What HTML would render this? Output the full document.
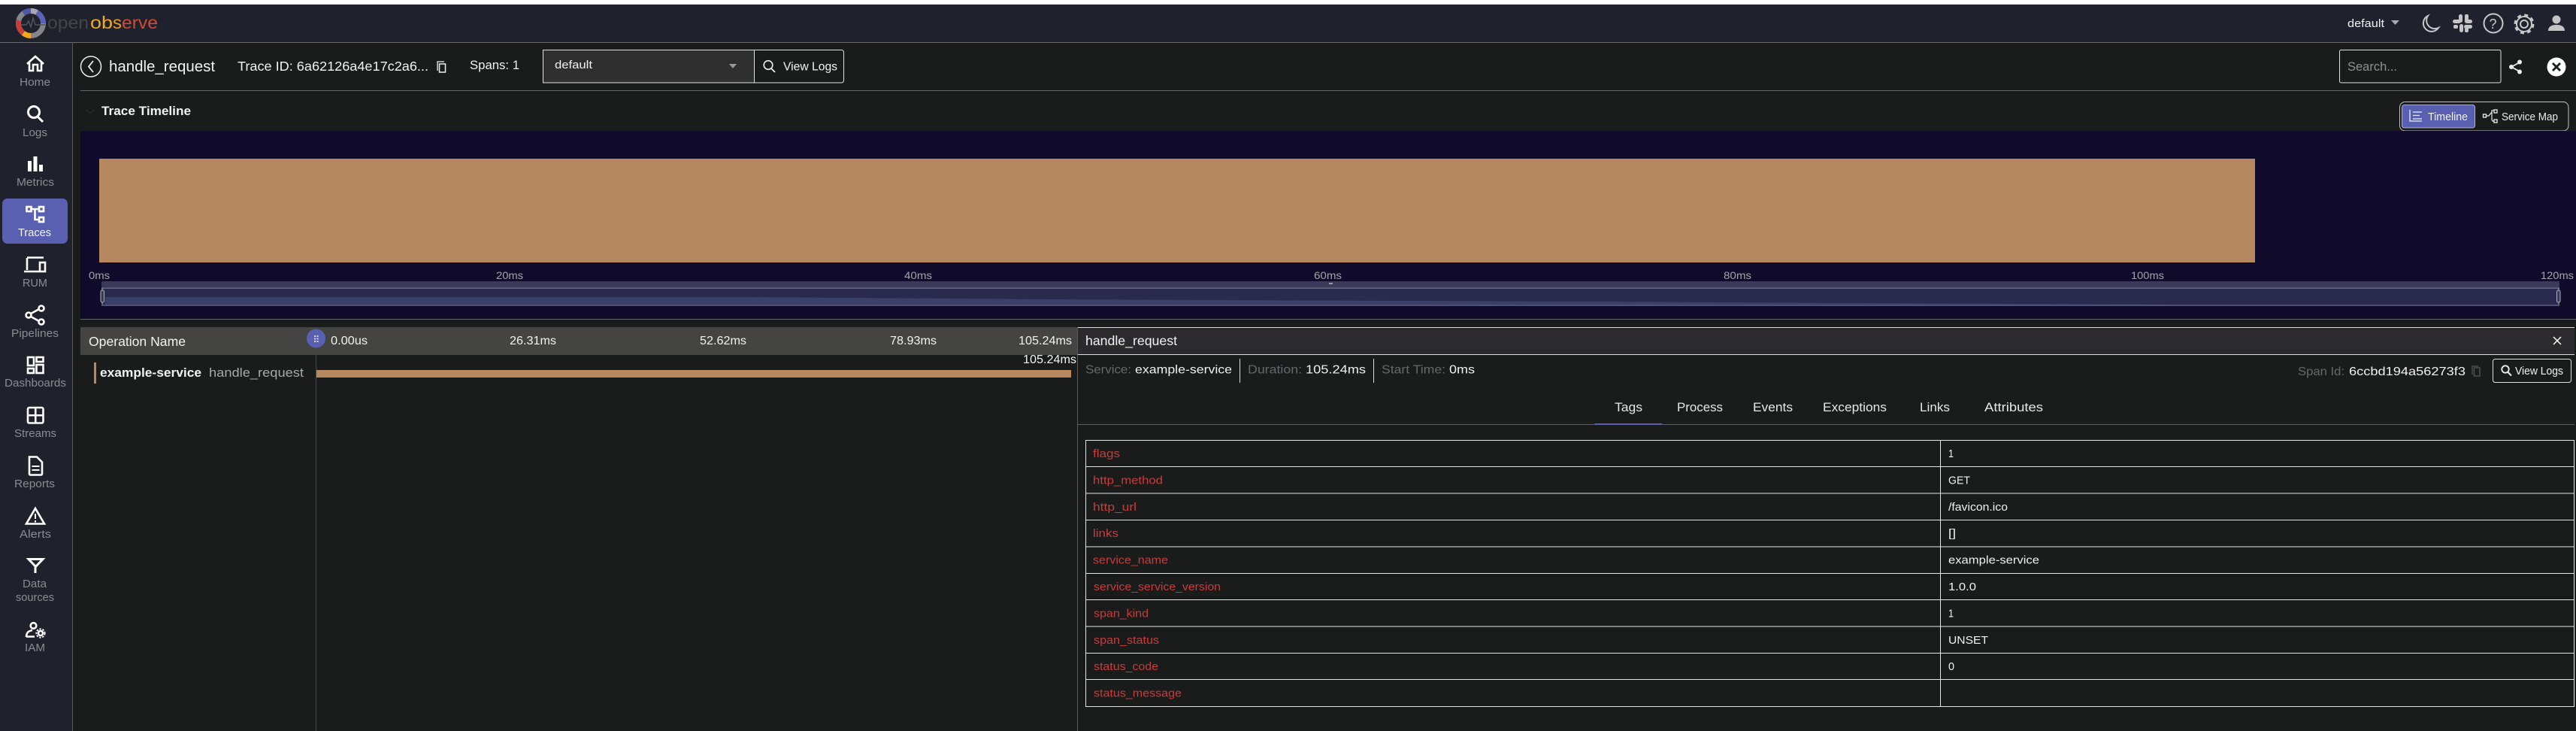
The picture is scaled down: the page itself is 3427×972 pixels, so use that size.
<!DOCTYPE html>
<html lang="en"><head><meta charset="utf-8"><title>Trace</title>
<style>
html,body{margin:0;padding:0;background:#1a1c1c;width:3427px;height:972px;overflow:hidden}
svg{display:block;font-family:"Liberation Sans",sans-serif}
.w{fill:#f2f2f2}.g{fill:#66686a}.s{fill:#8b8c90}.r{fill:#c93c3c}
.i{fill:none;stroke:#fff;stroke-width:2.6}
</style></head><body>
<svg xmlns="http://www.w3.org/2000/svg" width="3427" height="972" viewBox="0 0 3427 972">
<rect width="3427" height="972" fill="#1a1c1c"/>
<rect width="3427" height="6" fill="#fff"/>
<rect y="6" width="3427" height="50" fill="#1f222c"/>
<rect y="56" width="96" height="916" fill="#1f222c"/>
<rect y="56" width="3427" height="1" fill="#6a6b6d"/>
<rect x="96" y="56" width="1" height="916" fill="#55575a"/>

<!-- logo -->
<g fill="none" stroke-width="7">
<circle cx="41" cy="31" r="16.500" stroke="#85868a"/>
<path d="M31 17.500A16.500 16.500 0 0 1 41 14.500" stroke="#4f57a5"/>
<path d="M41 14.500A16.500 16.500 0 0 1 49 16.500" stroke="#a8a8aa"/>
<path d="M49 16.500A16.500 16.500 0 0 1 57.500 31" stroke="#5a62b5"/>
<path d="M25 27A16.500 16.500 0 0 0 31 44" stroke="#c93c3c"/>
<path d="M31 44A16.500 16.500 0 0 0 41 47.500" stroke="#f2a91e"/>
</g>
<path d="M28 33h7l3-5 3 8 3-12 3 9h13" fill="none" stroke="#555" stroke-width="1.500"/>
<text x="63" y="38" font-size="23" fill="#454545" textLength="55" lengthAdjust="spacingAndGlyphs">open</text>
<text x="120" y="38" font-size="23" fill="#f2a91e" textLength="30" lengthAdjust="spacingAndGlyphs">ob</text>
<text x="150" y="38" font-size="23" fill="#ef9a24" textLength="12" lengthAdjust="spacingAndGlyphs">s</text>
<text x="162" y="38" font-size="23" fill="#d14a35" textLength="48" lengthAdjust="spacingAndGlyphs">erve</text>

<!-- header right -->
<text x="3123" y="36" font-size="14.500" class="w" textLength="49" lengthAdjust="spacingAndGlyphs">default</text>
<path d="M3181 27h11l-5.500 6z" fill="#aaa"/>
<path d="M3230 21a11 11 0 1 0 14 16a11 11 0 0 1-14-16z" fill="none" stroke="#c8c8c8" stroke-width="2"/>
<g fill="#c4c4c4"><rect x="3271" y="19" width="5" height="11" rx="2.500"/><rect x="3263" y="26" width="11" height="5" rx="2.500"/><rect x="3272" y="32" width="5" height="11" rx="2.500"/><rect x="3264" y="33" width="6" height="5" rx="2"/><rect x="3279" y="19" width="5" height="11" rx="2"/><rect x="3279" y="26" width="10" height="5" rx="2.500"/><rect x="3278" y="33" width="11" height="5" rx="2.500"/><rect x="3279" y="37" width="5" height="6" rx="2"/></g>
<circle cx="3317" cy="31" r="12.500" fill="none" stroke="#c8c8c8" stroke-width="2"/>
<text x="3311.500" y="38" font-size="18" fill="#c8c8c8">?</text>
<circle cx="3358" cy="32" r="5" fill="none" stroke="#c8c8c8" stroke-width="2"/>
<circle cx="3358" cy="32" r="10" fill="none" stroke="#c8c8c8" stroke-width="2"/>
<circle cx="3358" cy="32" r="12" fill="none" stroke="#c8c8c8" stroke-width="3" stroke-dasharray="5 4.400"/>
<circle cx="3401" cy="26" r="5.500" fill="#c4c4c4"/><path d="M3390 41c0-6 5-8 11-8s11 2 11 8z" fill="#c4c4c4"/>

<!-- row 2 -->
<rect x="107" y="120" width="3320" height="1" fill="#66676a"/>
<circle cx="121" cy="88.500" r="13.500" fill="none" stroke="#eee" stroke-width="1.500"/>
<path d="M124 81l-6 7.500 6 7.500" fill="none" stroke="#eee" stroke-width="1.800"/>
<text x="145" y="95" font-size="20" class="w" textLength="141" lengthAdjust="spacingAndGlyphs">handle_request</text>
<text x="316" y="94" font-size="17.500" class="w" textLength="254" lengthAdjust="spacingAndGlyphs">Trace ID: 6a62126a4e17c2a6...</text>
<path d="M582 94V82h9" fill="none" stroke="#eee" stroke-width="1.300"/><rect x="584.500" y="85" width="8" height="11" fill="none" stroke="#eee" stroke-width="1.500"/>
<text x="625" y="92" font-size="17" class="w" textLength="66" lengthAdjust="spacingAndGlyphs">Spans: 1</text>
<rect x="722.500" y="66.500" width="281" height="43.500" fill="#2f2f2f" stroke="#e0e0e0"/>
<text x="738" y="91" font-size="14.500" class="w" textLength="50" lengthAdjust="spacingAndGlyphs">default</text>
<path d="M970 85h10l-5 6z" fill="#999"/>
<path d="M1003.500 66.500h116a3 3 0 0 1 3 3v37.500a3 3 0 0 1-3 3h-116z" fill="#1a1c1c" stroke="#e0e0e0"/>
<circle cx="1022" cy="86.500" r="5.800" fill="none" stroke="#eee" stroke-width="1.600"/><path d="M1026 91l5 5" stroke="#eee" stroke-width="1.800"/>
<text x="1042" y="93.500" font-size="15.500" class="w" textLength="72" lengthAdjust="spacingAndGlyphs">View Logs</text>
<rect x="3112.500" y="66.500" width="214.500" height="43.500" rx="2" fill="#1a1c1c" stroke="#e0e0e0"/>
<text x="3123" y="94" font-size="16.500" fill="#909090" textLength="66" lengthAdjust="spacingAndGlyphs">Search...</text>
<path d="M3352 83l-11 6 11 6" fill="none" stroke="#eee" stroke-width="1.800"/><circle cx="3352" cy="82.500" r="3" fill="#eee"/><circle cx="3341" cy="89" r="3" fill="#eee"/><circle cx="3352" cy="95.500" r="3" fill="#eee"/>
<circle cx="3401" cy="89" r="12.500" fill="#fff"/><path d="M3396 84l10 10M3406 84l-10 10" stroke="#1a1c1c" stroke-width="2.800"/>

<!-- timeline title -->
<text x="135" y="153" font-size="17" font-weight="bold" class="w" textLength="119" lengthAdjust="spacingAndGlyphs">Trace Timeline</text>
<path d="M115 146l5 5 5-5" fill="none" stroke="#2a2c2c" stroke-width="1.500"/>
<rect x="3192.500" y="135.500" width="224.500" height="38.500" rx="7" fill="none" stroke="#c4c4c4"/>
<rect x="3195.500" y="139.500" width="97" height="30.500" rx="3" fill="#5960b2" stroke="#cfd0e0" stroke-width=".8"/>
<path d="M3206 146v15h16M3210 149h12M3210 153.500h9M3210 158h12" fill="none" stroke="#eee" stroke-width="1.300"/>
<text x="3230" y="160" font-size="14.500" class="w" textLength="53" lengthAdjust="spacingAndGlyphs">Timeline</text>
<path d="M3308 154h3l4-5v-2h3M3315 149v10l1 2h2" fill="none" stroke="#eee" stroke-width="1.200"/><rect x="3303.500" y="152" width="4" height="4" fill="none" stroke="#eee" stroke-width="1.300"/><rect x="3318" y="146" width="4" height="4" fill="none" stroke="#eee" stroke-width="1.300"/><rect x="3318" y="159" width="4" height="4" fill="none" stroke="#eee" stroke-width="1.300"/>
<text x="3328" y="160" font-size="15" fill="#e8e8e8" textLength="75" lengthAdjust="spacingAndGlyphs">Service Map</text>

<!-- chart -->
<rect x="107" y="174" width="3320" height="250" fill="#100b2a"/>
<rect x="107" y="424" width="3320" height="1" fill="#66676a"/>
<rect x="132" y="211" width="2868" height="138" fill="#b5885f"/>
<g font-size="14" fill="#a3a3aa">
<text x="118" y="371" textLength="28" lengthAdjust="spacingAndGlyphs">0ms</text>
<text x="660" y="371" textLength="36" lengthAdjust="spacingAndGlyphs">20ms</text>
<text x="1203" y="371" textLength="37" lengthAdjust="spacingAndGlyphs">40ms</text>
<text x="1748" y="371" textLength="37" lengthAdjust="spacingAndGlyphs">60ms</text>
<text x="2293" y="371" textLength="37" lengthAdjust="spacingAndGlyphs">80ms</text>
<text x="2835" y="371" textLength="44" lengthAdjust="spacingAndGlyphs">100ms</text>
<text x="3380" y="371" textLength="44" lengthAdjust="spacingAndGlyphs">120ms</text>
</g>
<rect x="135" y="374" width="3270" height="33" rx="2" fill="#2a2a4e"/>
<path d="M137 374h3266a2 2 0 0 1 2 2v7H135v-7a2 2 0 0 1 2-2z" fill="#3b3a5a"/>
<rect x="135" y="382.500" width="3270" height="1.500" fill="#66667a"/>
<path d="M140 395H1000L1400 398L2100 401L2900 405V405H140z" fill="#3a4068"/>
<rect x="135" y="405" width="3270" height="2" fill="#4f4f74"/>
<rect x="1768" y="376" width="5" height="2" fill="#999"/>
<path d="M136 383v22" stroke="#aaa" stroke-width="1"/><rect x="134" y="386" width="4.500" height="16" rx="2" fill="#3a3a58" stroke="#b0b0b8"/>
<path d="M3404 383v22" stroke="#aaa" stroke-width="1"/><rect x="3401.500" y="386" width="4.500" height="16" rx="2" fill="#3a3a58" stroke="#b0b0b8"/>

<!-- trace table -->
<rect x="107" y="435" width="1326" height="37" fill="#444442"/>
<text x="118" y="460" font-size="17.500" class="w" textLength="129" lengthAdjust="spacingAndGlyphs">Operation Name</text>
<rect x="420" y="472" width="1" height="500" fill="#4a4b4d"/>
<circle cx="420.500" cy="450" r="12.500" fill="#5960b2"/>
<g fill="#ddd"><rect x="418" y="446" width="2" height="2"/><rect x="421.500" y="446" width="2" height="2"/><rect x="418" y="449.500" width="2" height="2"/><rect x="421.500" y="449.500" width="2" height="2"/><rect x="418" y="453" width="2" height="2"/><rect x="421.500" y="453" width="2" height="2"/></g>
<g font-size="15.500" class="w">
<text x="440" y="458" textLength="49" lengthAdjust="spacingAndGlyphs">0.00us</text>
<text x="678" y="458" textLength="62" lengthAdjust="spacingAndGlyphs">26.31ms</text>
<text x="931" y="458" textLength="62" lengthAdjust="spacingAndGlyphs">52.62ms</text>
<text x="1184" y="458" textLength="62" lengthAdjust="spacingAndGlyphs">78.93ms</text>
<text x="1355" y="458" textLength="71" lengthAdjust="spacingAndGlyphs">105.24ms</text>
<text x="1361" y="483" textLength="71" lengthAdjust="spacingAndGlyphs">105.24ms</text>
</g>
<rect x="125" y="482" width="3" height="28" fill="#b5885f"/>
<text x="133" y="501" font-size="17" font-weight="bold" class="w" textLength="135" lengthAdjust="spacingAndGlyphs">example-service</text>
<text x="278" y="501" font-size="17" fill="#a8a8a8" textLength="126" lengthAdjust="spacingAndGlyphs">handle_request</text>
<rect x="421" y="492" width="1004" height="10" fill="#b5885f"/>

<!-- detail panel -->
<rect x="1433" y="435" width="1" height="537" fill="#5a5b5d"/>
<rect x="1434" y="436" width="1991" height="35" fill="#2b2b2d"/>
<rect x="1434" y="435" width="1991" height="1" fill="#ddd"/>
<rect x="1434" y="471" width="1991" height="1" fill="#ddd"/>
<text x="1444" y="459" font-size="17.500" class="w" textLength="122" lengthAdjust="spacingAndGlyphs">handle_request</text>
<path d="M3397 448l10 10M3407 448l-10 10" stroke="#fff" stroke-width="1.500"/>
<g font-size="16">
<text x="1444" y="496.500" class="g" textLength="61" lengthAdjust="spacingAndGlyphs">Service:</text>
<text x="1510" y="496.500" class="w" textLength="129" lengthAdjust="spacingAndGlyphs">example-service</text>
<text x="1660" y="496.500" class="g" textLength="72" lengthAdjust="spacingAndGlyphs">Duration:</text>
<text x="1737" y="496.500" class="w" textLength="80" lengthAdjust="spacingAndGlyphs">105.24ms</text>
<text x="1838" y="496.500" class="g" textLength="85" lengthAdjust="spacingAndGlyphs">Start Time:</text>
<text x="1928" y="496.500" class="w" textLength="34" lengthAdjust="spacingAndGlyphs">0ms</text>
<text x="3057" y="499" class="g" textLength="62" lengthAdjust="spacingAndGlyphs">Span Id:</text>
<text x="3125" y="499" class="w" textLength="155" lengthAdjust="spacingAndGlyphs">6ccbd194a56273f3</text>
</g>
<rect x="1649" y="477" width="1" height="32" fill="#ddd"/><rect x="1827" y="477" width="1" height="32" fill="#ddd"/>
<path d="M3289 498v-11h8" fill="none" stroke="#55575a" stroke-width="1.200"/><rect x="3291.500" y="489" width="7.500" height="11" fill="none" stroke="#55575a" stroke-width="1.300"/>
<rect x="3316.500" y="477.500" width="104" height="31" rx="3" fill="none" stroke="#e0e0e0"/>
<circle cx="3333" cy="491" r="4.700" fill="none" stroke="#eee" stroke-width="1.800"/><path d="M3336 494.500l5 5" stroke="#eee" stroke-width="2"/>
<text x="3346" y="498" font-size="14.500" class="w" textLength="64" lengthAdjust="spacingAndGlyphs">View Logs</text>
<g font-size="16.500" fill="#e6e6e6">
<text x="2148" y="547" textLength="37" lengthAdjust="spacingAndGlyphs">Tags</text>
<text x="2231" y="547" textLength="61" lengthAdjust="spacingAndGlyphs">Process</text>
<text x="2332" y="547" textLength="53" lengthAdjust="spacingAndGlyphs">Events</text>
<text x="2425" y="547" textLength="85" lengthAdjust="spacingAndGlyphs">Exceptions</text>
<text x="2554" y="547" textLength="40" lengthAdjust="spacingAndGlyphs">Links</text>
<text x="2640" y="547" textLength="78" lengthAdjust="spacingAndGlyphs">Attributes</text>
</g>
<rect x="1434" y="564" width="1991" height="1" fill="#5f6062"/>
<rect x="2121" y="563" width="90" height="2" fill="#5960b2"/>

<!-- tags table -->
<g fill="none" stroke="#e4e4e4" stroke-width="1">
<rect x="1444.500" y="585.500" width="1980" height="354"/>
<path d="M2581.500 585.500V939.500M1444.500 620.500H3424.500M1444.500 656H3424.500M1444.500 691.500H3424.500M1444.500 727H3424.500M1444.500 762.500H3424.500M1444.500 797.500H3424.500M1444.500 833H3424.500M1444.500 868.500H3424.500M1444.500 903.500H3424.500"/>
</g>
<g font-size="15" class="r">
<text x="1454" y="608" textLength="36" lengthAdjust="spacingAndGlyphs">flags</text>
<text x="1454" y="643.500" textLength="93" lengthAdjust="spacingAndGlyphs">http_method</text>
<text x="1454" y="679" textLength="58" lengthAdjust="spacingAndGlyphs">http_url</text>
<text x="1454" y="714" textLength="34" lengthAdjust="spacingAndGlyphs">links</text>
<text x="1454" y="749.500" textLength="100" lengthAdjust="spacingAndGlyphs">service_name</text>
<text x="1455" y="785" textLength="169" lengthAdjust="spacingAndGlyphs">service_service_version</text>
<text x="1455" y="820.500" textLength="73" lengthAdjust="spacingAndGlyphs">span_kind</text>
<text x="1455" y="856" textLength="87" lengthAdjust="spacingAndGlyphs">span_status</text>
<text x="1455" y="891" textLength="86" lengthAdjust="spacingAndGlyphs">status_code</text>
<text x="1455" y="926.500" textLength="117" lengthAdjust="spacingAndGlyphs">status_message</text>
</g>
<g font-size="15" class="w">
<text x="2592" y="608" textLength="7" lengthAdjust="spacingAndGlyphs">1</text>
<text x="2592" y="643.500" textLength="29" lengthAdjust="spacingAndGlyphs">GET</text>
<text x="2592" y="679" textLength="79" lengthAdjust="spacingAndGlyphs">/favicon.ico</text>
<text x="2592" y="714" textLength="10" lengthAdjust="spacingAndGlyphs">[]</text>
<text x="2592" y="749.500" textLength="121" lengthAdjust="spacingAndGlyphs">example-service</text>
<text x="2592" y="785" textLength="37" lengthAdjust="spacingAndGlyphs">1.0.0</text>
<text x="2592" y="820.500" textLength="7" lengthAdjust="spacingAndGlyphs">1</text>
<text x="2592" y="856" textLength="53" lengthAdjust="spacingAndGlyphs">UNSET</text>
<text x="2592" y="891" textLength="8" lengthAdjust="spacingAndGlyphs">0</text>
</g>

<!-- sidebar -->
<rect x="3" y="264" width="87" height="60" rx="7" fill="#5960b2"/>
<g font-size="14.500" class="s">
<text x="26" y="114" textLength="41" lengthAdjust="spacingAndGlyphs">Home</text>
<text x="30" y="181" textLength="33" lengthAdjust="spacingAndGlyphs">Logs</text>
<text x="22" y="247" textLength="50" lengthAdjust="spacingAndGlyphs">Metrics</text>
<text x="24" y="314" style="fill:#f4f4f4" textLength="44" lengthAdjust="spacingAndGlyphs">Traces</text>
<text x="30" y="381" textLength="33" lengthAdjust="spacingAndGlyphs">RUM</text>
<text x="15" y="448" textLength="63" lengthAdjust="spacingAndGlyphs">Pipelines</text>
<text x="6" y="514" textLength="82" lengthAdjust="spacingAndGlyphs">Dashboards</text>
<text x="19" y="581" textLength="56" lengthAdjust="spacingAndGlyphs">Streams</text>
<text x="19" y="648" textLength="54" lengthAdjust="spacingAndGlyphs">Reports</text>
<text x="26" y="715" textLength="42" lengthAdjust="spacingAndGlyphs">Alerts</text>
<text x="30" y="781" textLength="32" lengthAdjust="spacingAndGlyphs">Data</text>
<text x="21" y="799" textLength="51" lengthAdjust="spacingAndGlyphs">sources</text>
<text x="33" y="866" textLength="27" lengthAdjust="spacingAndGlyphs">IAM</text>
</g>
<path d="M36 85l11-10 11 10M39 83v11h5v-8h6v8h5V83" class="i"/>
<circle cx="45" cy="149" r="7.500" class="i" style="stroke-width:3"/><path d="M50 155l7 7" class="i" style="stroke-width:3"/>
<g fill="#fff"><rect x="37" y="214" width="5" height="14"/><rect x="44.500" y="208" width="5" height="20"/><rect x="52" y="219" width="5" height="9"/></g>
<g class="i"><rect x="35.500" y="275" width="6" height="6"/><rect x="52" y="275" width="6" height="6"/><rect x="52" y="289" width="6" height="6"/><path d="M41.500 278H52M46.500 278v14H52"/></g>
<path d="M36 342.500h22M36 343v16M32 361h20" class="i"/><rect x="53" y="349" width="7" height="12" class="i"/>
<g class="i"><circle cx="38" cy="419" r="3.500"/><circle cx="55" cy="410" r="3.500"/><circle cx="55" cy="428" r="3.500"/><path d="M41 417l11-6M41 421l11 6"/></g>
<g class="i"><rect x="37" y="475" width="8" height="11"/><rect x="48.500" y="475" width="9" height="6"/><rect x="37" y="490" width="8" height="6"/><rect x="48.500" y="485" width="9" height="11"/></g>
<rect x="37" y="542" width="20.500" height="20.500" rx="2" class="i"/><path d="M47.250 542v20.500M37 552.250h20.500" class="i"/>
<path d="M39 607.500h10l7 7v15.500a1.500 1.500 0 0 1-1.500 1.500h-14a1.500 1.500 0 0 1-1.500-1.500z" class="i"/><path d="M42.500 620h10M42.500 625h10" class="i" style="stroke-width:2"/>
<path d="M47 676l12 20.500H35z" class="i"/><path d="M47 683v7M47 692v2.500" class="i" style="stroke-width:2"/>
<path d="M38 743.500h19l-9.500 10zM47 752v10" class="i" style="stroke-width:3"/>
<circle cx="44.500" cy="832" r="3.800" class="i"/><path d="M35 847c0-6 3-8 8-9M35 846.500h11" class="i"/><circle cx="54" cy="842" r="3" class="i" style="stroke-width:2.500"/><circle cx="54" cy="842" r="5.600" fill="none" stroke="#fff" stroke-width="2" stroke-dasharray="2.400 1.700"/>
</svg>
</body></html>
